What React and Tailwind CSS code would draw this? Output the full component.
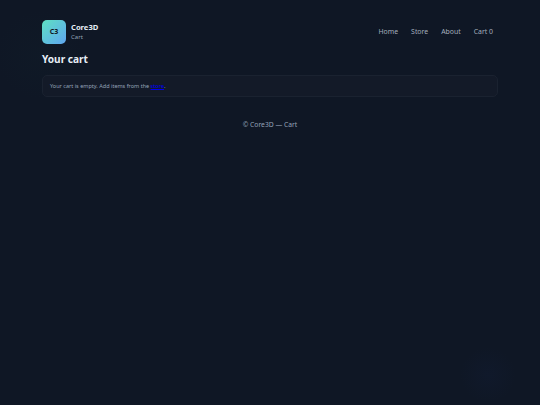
export default function App() {
  return (
    <div className="min-h-[405px] antialiased bg-[#0f1725] bg-[radial-gradient(circle_at_488px_375px,rgba(30,58,138,0.06),transparent_28px),radial-gradient(circle_at_40px_55px,rgba(20,60,60,0.06),transparent_45px)] text-[#e6eef6] font-['Noto_Sans',sans-serif]">
      <div className="px-[42px] pt-5">
        <header className="flex items-center justify-between">
          <div className="flex items-center gap-[5px]">
            <div className="flex h-6 w-6 items-center justify-center rounded-[5px] bg-gradient-to-br from-[#5fe0c0] to-[#60a5f0] pt-px text-[7px] font-bold text-[#0f1724]">C3</div>
            <div className="flex flex-col">
              <span className="text-[7.6px] leading-[11px] font-bold">Core3D</span>
              <span className="text-[6px] leading-[9px] text-[#94a3b8]">Cart</span>
            </div>
          </div>
          <nav className="flex gap-[13px] pr-[5px] text-[6.9px] text-[#a3aebc]">
            <span>Home</span><span>Store</span><span>About</span><span>Cart 0</span>
          </nav>
        </header>
        <h1 className="mt-[7px] text-[10.1px] leading-[16px] font-bold">Your cart</h1>
        <div className="mt-[8px] rounded-[5px] border border-[#1a2230] bg-[#131a28] px-[7px] py-[5.5px] text-[5.5px] leading-[9px] text-[#94a3b8]">
          Your cart is empty. Add items from the <a href="#" className="font-medium text-[#0000ee] underline">store</a>.
        </div>
        <footer className="mt-[21.5px] text-center text-[6.75px] leading-[11px] text-[#94a3b8]">© Core3D — Cart</footer>
      </div>
    </div>
  );
}
